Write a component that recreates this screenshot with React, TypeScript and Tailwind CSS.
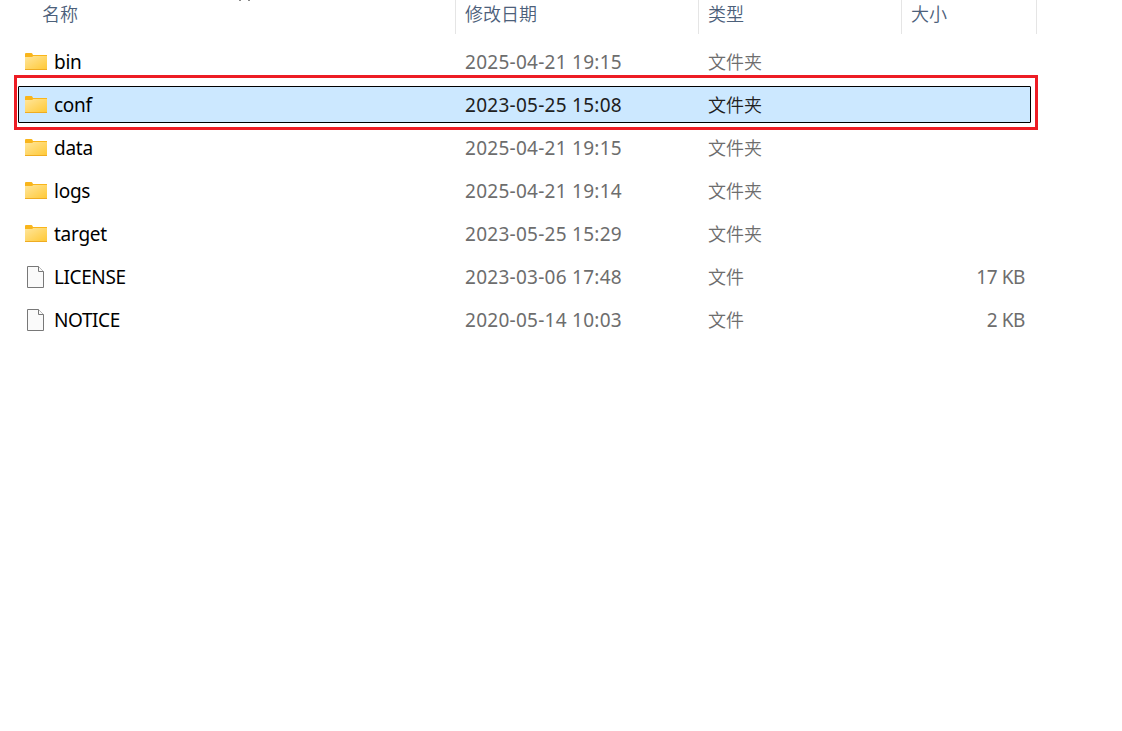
import clsx from "clsx";

type Entry = {
  name: string;
  date: string;
  kind: "folder" | "file";
  size?: string;
  selected?: boolean;
};

const entries: Entry[] = [
  { name: "bin", date: "2025-04-21 19:15", kind: "folder" },
  { name: "conf", date: "2023-05-25 15:08", kind: "folder", selected: true },
  { name: "data", date: "2025-04-21 19:15", kind: "folder" },
  { name: "logs", date: "2025-04-21 19:14", kind: "folder" },
  { name: "target", date: "2023-05-25 15:29", kind: "folder" },
  { name: "LICENSE", date: "2023-03-06 17:48", kind: "file", size: "17 KB" },
  { name: "NOTICE", date: "2020-05-14 10:03", kind: "file", size: "2 KB" },
];

function FolderIcon() {
  return (
    <svg width="22" height="17" viewBox="0 0 22 17" className="mt-[10px] block">
      <defs>
        <linearGradient id="folder" x1="0" y1="0" x2="1" y2="1">
          <stop offset="0" stopColor="#ffe69c" />
          <stop offset="1" stopColor="#ffc937" />
        </linearGradient>
      </defs>
      <path d="M0 1Q0 0 1 0H6.5Q7.3 0 8 2H22V5H0Z" fill="#f9b51b" />
      <path d="M0 4H6.5Q7.5 4 8.3 3H22V16H0Z" fill="url(#folder)" />
      <path d="M0 16H22V17H0Z" fill="#efac22" />
    </svg>
  );
}

function FileIcon() {
  return (
    <svg
      width="17"
      height="22"
      viewBox="0 0 17 22"
      fill="#fafafa"
      stroke="#787878"
      className="mt-2 ml-[2px] block"
    >
      <path d="M.5 .5H11.5L16.5 5.5V21.5H.5Z" />
      <path d="M11.5 .5V5.5H16.5" />
    </svg>
  );
}

function Header() {
  return (
    <div className="grid h-[34px] grid-cols-[455px_243px_203px_136px] text-lg leading-[29px] font-[350] text-[#4c607a]">
      <div className="pl-[42px]">名称</div>
      <div className="border-l border-[#e5e5e5] pl-[9px]">修改日期</div>
      <div className="border-l border-[#e5e5e5] pl-[9px]">类型</div>
      <div className="border-x border-[#e5e5e5] pl-[9px]">大小</div>
    </div>
  );
}

function Row({ entry }: { entry: Entry }) {
  const { name, date, kind, size, selected } = entry;
  return (
    <div className="h-[43px] py-[3px] pl-[18px]">
      <div
        className={clsx(
          "grid h-[37px] w-[1013px] grid-cols-[437px_243px_203px_1fr] rounded-[1px] text-[19px] leading-[39px] whitespace-nowrap",
          selected ? "bg-[#cce8ff] text-[#202020] outline-1 -outline-offset-1 outline-black" : "text-[#6d6d6d]",
        )}
      >
        <div className="flex items-start text-black">
          <span className="w-9 pl-[7px]">{kind === "folder" ? <FolderIcon /> : <FileIcon />}</span>
          <span className={kind === "folder" ? "tracking-[-0.25px]" : "tracking-[-0.4px]"}>{name}</span>
        </div>
        <div className="pl-[10px] tracking-[0.27px]">{date}</div>
        <div className="pl-[10px] text-lg leading-[39px] font-[350]">{kind === "folder" ? "文件夹" : "文件"}</div>
        <div className="pr-[6px] text-right tracking-[-0.4px]">{size}</div>
      </div>
    </div>
  );
}

export default function App() {
  return (
    <div className="relative h-[731px] w-[1122px] overflow-hidden bg-white font-['Noto_Sans','Noto_Sans_CJK_SC',sans-serif]">
      <Header />
      <div className="pt-[6px]">
        {entries.map((entry) => (
          <Row key={entry.name} entry={entry} />
        ))}
      </div>
      {/* lower tips of the sort arrow, cut off by the top edge */}
      <div className="absolute top-0 left-[239px] flex h-px w-[11px] justify-between">
        <span className="w-[2px] bg-[#8a8a8a]" />
        <span className="w-[2px] bg-[#8a8a8a]" />
      </div>
      <div className="absolute top-[75px] left-[14px] h-[55px] w-[1024px] border-3 border-[#ed1c24]" />
    </div>
  );
}
